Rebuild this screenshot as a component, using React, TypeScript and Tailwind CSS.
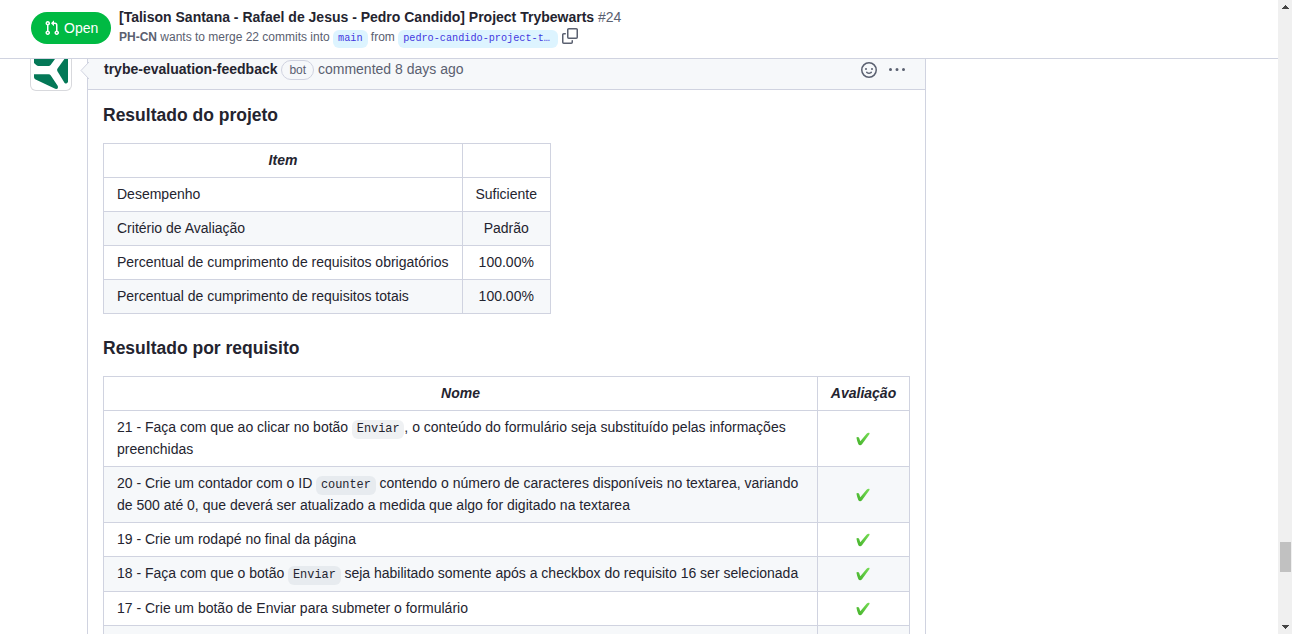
import React from 'react';

const PR_PATH =
  'M7.177 3.073L9.573.677A.25.25 0 0110 .854v4.792a.25.25 0 01-.427.177L7.177 3.427a.25.25 0 010-.354zM3.75 2.5a.75.75 0 100 1.5.75.75 0 000-1.5zm-2.25.75a2.25 2.25 0 113 2.122v5.256a2.251 2.251 0 11-1.5 0V5.372A2.25 2.25 0 011.5 3.25zM11 2.5h-1V4h1a1 1 0 011 1v5.628a2.251 2.251 0 101.5 0V5A2.5 2.5 0 0011 2.5zm1 10.25a.75.75 0 111.5 0 .75.75 0 01-1.5 0zM3.75 12a.75.75 0 100 1.5.75.75 0 000-1.5z';
const COPY_PATH =
  'M0 6.75C0 5.784.784 5 1.75 5h1.5a.75.75 0 010 1.5h-1.5a.25.25 0 00-.25.25v7.5c0 .138.112.25.25.25h7.5a.25.25 0 00.25-.25v-1.5a.75.75 0 011.5 0v1.5A1.75 1.75 0 019.25 16h-7.5A1.75 1.75 0 010 14.25v-7.5zM5 1.75C5 .784 5.784 0 6.75 0h7.5C15.216 0 16 .784 16 1.75v7.5A1.75 1.75 0 0114.25 11h-7.5A1.75 1.75 0 015 9.25v-7.5zm1.75-.25a.25.25 0 00-.25.25v7.5c0 .138.112.25.25.25h7.5a.25.25 0 00.25-.25v-7.5a.25.25 0 00-.25-.25h-7.5z';
const SMILEY_PATH =
  'M1.5 8a6.5 6.5 0 1113 0 6.5 6.5 0 01-13 0zM8 0a8 8 0 100 16A8 8 0 008 0zM5 8a1 1 0 100-2 1 1 0 000 2zm7-1a1 1 0 11-2 0 1 1 0 012 0zM5.32 9.636a.75.75 0 011.038.175l.007.009c.103.118.22.222.35.31.264.178.683.37 1.285.37.602 0 1.02-.192 1.285-.371.13-.088.247-.192.35-.31l.007-.008a.75.75 0 111.222.87l-.614-.431c.614.43.614.431.613.431v.001l-.001.002-.002.003-.005.007-.014.019a1.984 1.984 0 01-.184.213c-.16.166-.338.316-.53.445-.63.418-1.37.638-2.127.629-.946 0-1.652-.308-2.126-.63a3.32 3.32 0 01-.715-.657l-.014-.02-.005-.006-.002-.003v-.002h-.001l.613-.432-.614.43a.75.75 0 01.183-1.044h.001z';
const KEBAB_PATH =
  'M8 9a1.5 1.5 0 100-3 1.5 1.5 0 000 3zM1.5 9a1.5 1.5 0 100-3 1.5 1.5 0 000 3zm13 0a1.5 1.5 0 100-3 1.5 1.5 0 000 3z';

function Octicon({ d, className = '' }: { d: string; className?: string }) {
  return (
    <svg viewBox="0 0 16 16" width="16" height="16" fill="currentColor" className={`shrink-0 ${className}`}>
      <path fillRule="evenodd" d={d} />
    </svg>
  );
}

function Code({ children }: { children: React.ReactNode }) {
  return (
    <code className="rounded-md bg-[#afb8c133] px-[0.4em] py-[0.2em] align-[-1px] font-['Liberation_Mono',monospace] text-[11.9px] leading-[14px]">
      {children}
    </code>
  );
}

function Check() {
  return (
    <svg viewBox="0 0 16 16" width="16" height="16" className="mr-auto ml-[37px] block">
      <defs>
        <linearGradient id="check" x1="0" y1="1" x2="1" y2="0">
          <stop offset="0" stopColor="#43b02a" />
          <stop offset="1" stopColor="#77dd55" />
        </linearGradient>
      </defs>
      <path
        d="M1.4 6.6C2.1 5.6 3.8 5.7 4.2 6.9L5.3 10.2L11.6 2.7C12.4 1.8 13.9 1.5 14.4 1.9C14.8 2.3 14.4 3.2 13.8 4L7 13.3C6 14.7 4.1 14.7 3.4 13.2C2.5 11.3 1.8 9 1.4 6.6Z"
        fill="url(#check)"
      />
    </svg>
  );
}

function Header() {
  return (
    <header className="flex h-[59px] shrink-0 items-start border-b border-[#d0d3e0] bg-white pl-[31px]">
      <span className="mt-3 flex h-8 w-20 items-center rounded-full bg-[#00ba43] pl-[13px] text-[14px] text-white">
        <Octicon d={PR_PATH} className="mr-1" />
        Open
      </span>
      <div className="ml-2 mt-[7px]">
        <h1 className="text-[14px] leading-[21px] font-bold whitespace-nowrap">
          [Talison Santana - Rafael de Jesus - Pedro Candido] Project Trybewarts{' '}
          <span className="font-normal text-[#5a6070]">#24</span>
        </h1>
        <div className="flex h-[18px] items-center text-[12px] leading-[18px] whitespace-nowrap text-[#5a6070]">
          <b>PH-CN</b>
          <span className="ml-[3.3px]">wants to merge 22 commits into</span>
          <span className="mt-[3px] ml-[3.4px] h-[18px] rounded-md bg-[#ddf4ff] px-[5px] font-['Liberation_Mono',monospace] text-[10.2px] leading-[17px] text-[#4338e0]">
            main
          </span>
          <span className="ml-[3.3px]">from</span>
          <span className="mt-[3px] ml-[3.3px] h-[18px] w-[160px] rounded-md bg-[#ddf4ff] pl-[5px] font-['Liberation_Mono',monospace] text-[10.2px] leading-[17px] text-[#4338e0]">
            pedro-candido-project-t…
          </span>
          <Octicon d={COPY_PATH} className="ml-1 -mt-[2px]" />
        </div>
      </div>
    </header>
  );
}

function Avatar() {
  return (
    <div className="h-8 w-[42px] shrink-0 overflow-hidden rounded-b-md border border-t-0 border-[#d8d9dd] bg-white">
      <svg width="40" height="31" viewBox="0 0 40 31" fill="#047857">
        <path d="M3 0H24L19.6 6Q18.8 7 17.5 7H7.5Q6.3 7 5.2 6L3 4Z" />
        <path d="M3 15.2H17.5Q19 15.2 19.8 16.6L26.8 27Q27.6 30.6 24.2 29.8L4.6 20.4Q3 19.6 3 18.2Z" />
        <path d="M33.4 0H37V22.8Q36 25.6 33.6 24L26.3 12Q25.8 10.8 26.4 9.8Z" />
      </svg>
    </div>
  );
}

const items = [
  ['Desempenho', 'Suficiente'],
  ['Critério de Avaliação', 'Padrão'],
  ['Percentual de cumprimento de requisitos obrigatórios', '100.00%'],
  ['Percentual de cumprimento de requisitos totais', '100.00%'],
];

const requirements: { row: string; cell: string; text: React.ReactNode }[] = [
  {
    row: 'h-14',
    cell: 'pb-[2px] leading-[22px]',
    text: (
      <>
        21 - Faça com que ao clicar no botão <Code>Enviar</Code>, o conteúdo do formulário seja substituído pelas
        informações preenchidas
      </>
    ),
  },
  {
    row: 'h-14',
    cell: 'pb-[2px] leading-[22px]',
    text: (
      <>
        20 - Crie um contador com o ID <Code>counter</Code> contendo o número de caracteres disponíveis no textarea,
        variando de 500 até 0, que deverá ser atualizado a medida que algo for digitado na textarea
      </>
    ),
  },
  { row: 'h-[34px]', cell: 'pb-0', text: '19 - Crie um rodapé no final da página' },
  {
    row: 'h-[35px]',
    cell: 'pb-[2px]',
    text: (
      <>
        18 - Faça com que o botão <Code>Enviar</Code> seja habilitado somente após a checkbox do requisito 16 ser
        selecionada
      </>
    ),
  },
  { row: 'h-[34px]', cell: 'pb-0', text: '17 - Crie um botão de Enviar para submeter o formulário' },
  { row: 'h-[34px]', cell: 'pb-0', text: '' },
];

function Comment() {
  return (
    <article className="w-[839px] shrink-0 border-x border-[#d0d3e0]">
      <div className="relative flex h-[31px] items-start border-b border-[#d0d3e0] bg-[#f6f8fa] pl-4 text-[14px] leading-[21px] text-[#5a6070]">
        <svg width="9" height="17" viewBox="0 0 9 17" className="absolute top-[3px] -left-2">
          <path d="M9 0L1 8.5L9 17" fill="#f6f8fa" stroke="#d0d3e0" />
        </svg>
        <b className="text-[#24242f]">trybe-evaluation-feedback</b>
        <span className="mt-px ml-[3.6px] h-5 rounded-full border border-[#d0d3e0] px-[7.3px] text-[12px] leading-[18px]">bot</span>
        <span className="ml-[3.6px]">commented 8 days ago</span>
        <Octicon d={SMILEY_PATH} className="mt-[3px] ml-auto" />
        <Octicon d={KEBAB_PATH} className="mt-[3px] mr-5 ml-3" />
      </div>
      <div className="px-[15px] pt-[14px] text-[14px] leading-[21px]">
        <h2 className="text-[17.5px] leading-[22px] font-bold">Resultado do projeto</h2>
        <table className="mt-[17px] w-[448px] table-fixed border-collapse">
          <colgroup>
            <col className="w-[359px]" />
            <col className="w-[88px]" />
          </colgroup>
          <thead>
            <tr className="h-[34px]">
              <th className="border border-[#d0d3e0] p-0 italic">Item</th>
              <th className="border border-[#d0d3e0] p-0" />
            </tr>
          </thead>
          <tbody>
            {items.map(([name, value]) => (
              <tr key={name} className="h-[34px] even:bg-[#f6f8fa]">
                <td className="border border-[#d0d3e0] py-0 pr-0 pl-[13px] whitespace-nowrap">{name}</td>
                <td className="border border-[#d0d3e0] py-0 pr-[0.5px] pl-0 text-center">{value}</td>
              </tr>
            ))}
          </tbody>
        </table>
        <h2 className="mt-[23px] text-[17.5px] leading-[22px] font-bold">Resultado por requisito</h2>
        <table className="mt-[17px] w-[807px] table-fixed border-collapse">
          <colgroup>
            <col className="w-[714px]" />
            <col className="w-[92px]" />
          </colgroup>
          <thead>
            <tr className="h-[34px]">
              <th className="border border-[#d0d3e0] p-0 italic">Nome</th>
              <th className="border border-[#d0d3e0] p-0 italic">Avaliação</th>
            </tr>
          </thead>
          <tbody>
            {requirements.map(({ row, cell, text }, i) => (
              <tr key={i} className={`${row} even:bg-[#f6f8fa]`}>
                <td className={`border border-[#d0d3e0] px-[13px] pt-0 ${cell}`}>{text}</td>
                <td className="border border-[#d0d3e0] p-0">{text && <Check />}</td>
              </tr>
            ))}
          </tbody>
        </table>
      </div>
    </article>
  );
}

function Scrollbar() {
  return (
    <div className="flex w-[14px] shrink-0 flex-col items-center bg-[#f0f0f0] pt-[5px] pb-[5px]">
      <svg width="7" height="4" viewBox="0 0 7 4" fill="#454545" shapeRendering="crispEdges">
        <path d="M3 0H4V1H5V2H6V3H7V4H0V3H1V2H2V1H3Z" />
      </svg>
      <div className="mt-[533px] h-[30px] w-[11px] bg-[#c1c1c1]" />
      <svg width="7" height="4" viewBox="0 0 7 4" fill="#454545" shapeRendering="crispEdges" className="mt-auto">
        <path d="M0 0H7V1H6V2H5V3H4V4H3V3H2V2H1V1H0Z" />
      </svg>
    </div>
  );
}

export default function App() {
  return (
    <div className="flex h-[634px] w-[1292px] overflow-hidden bg-white font-['Liberation_Sans',sans-serif] text-[#24242f]">
      <main className="flex min-w-0 flex-1 flex-col overflow-hidden">
        <Header />
        <div className="flex min-h-0 flex-1 items-start overflow-hidden pl-[30px]">
          <Avatar />
          <div className="w-[15px] shrink-0" />
          <Comment />
        </div>
      </main>
      <Scrollbar />
    </div>
  );
}
